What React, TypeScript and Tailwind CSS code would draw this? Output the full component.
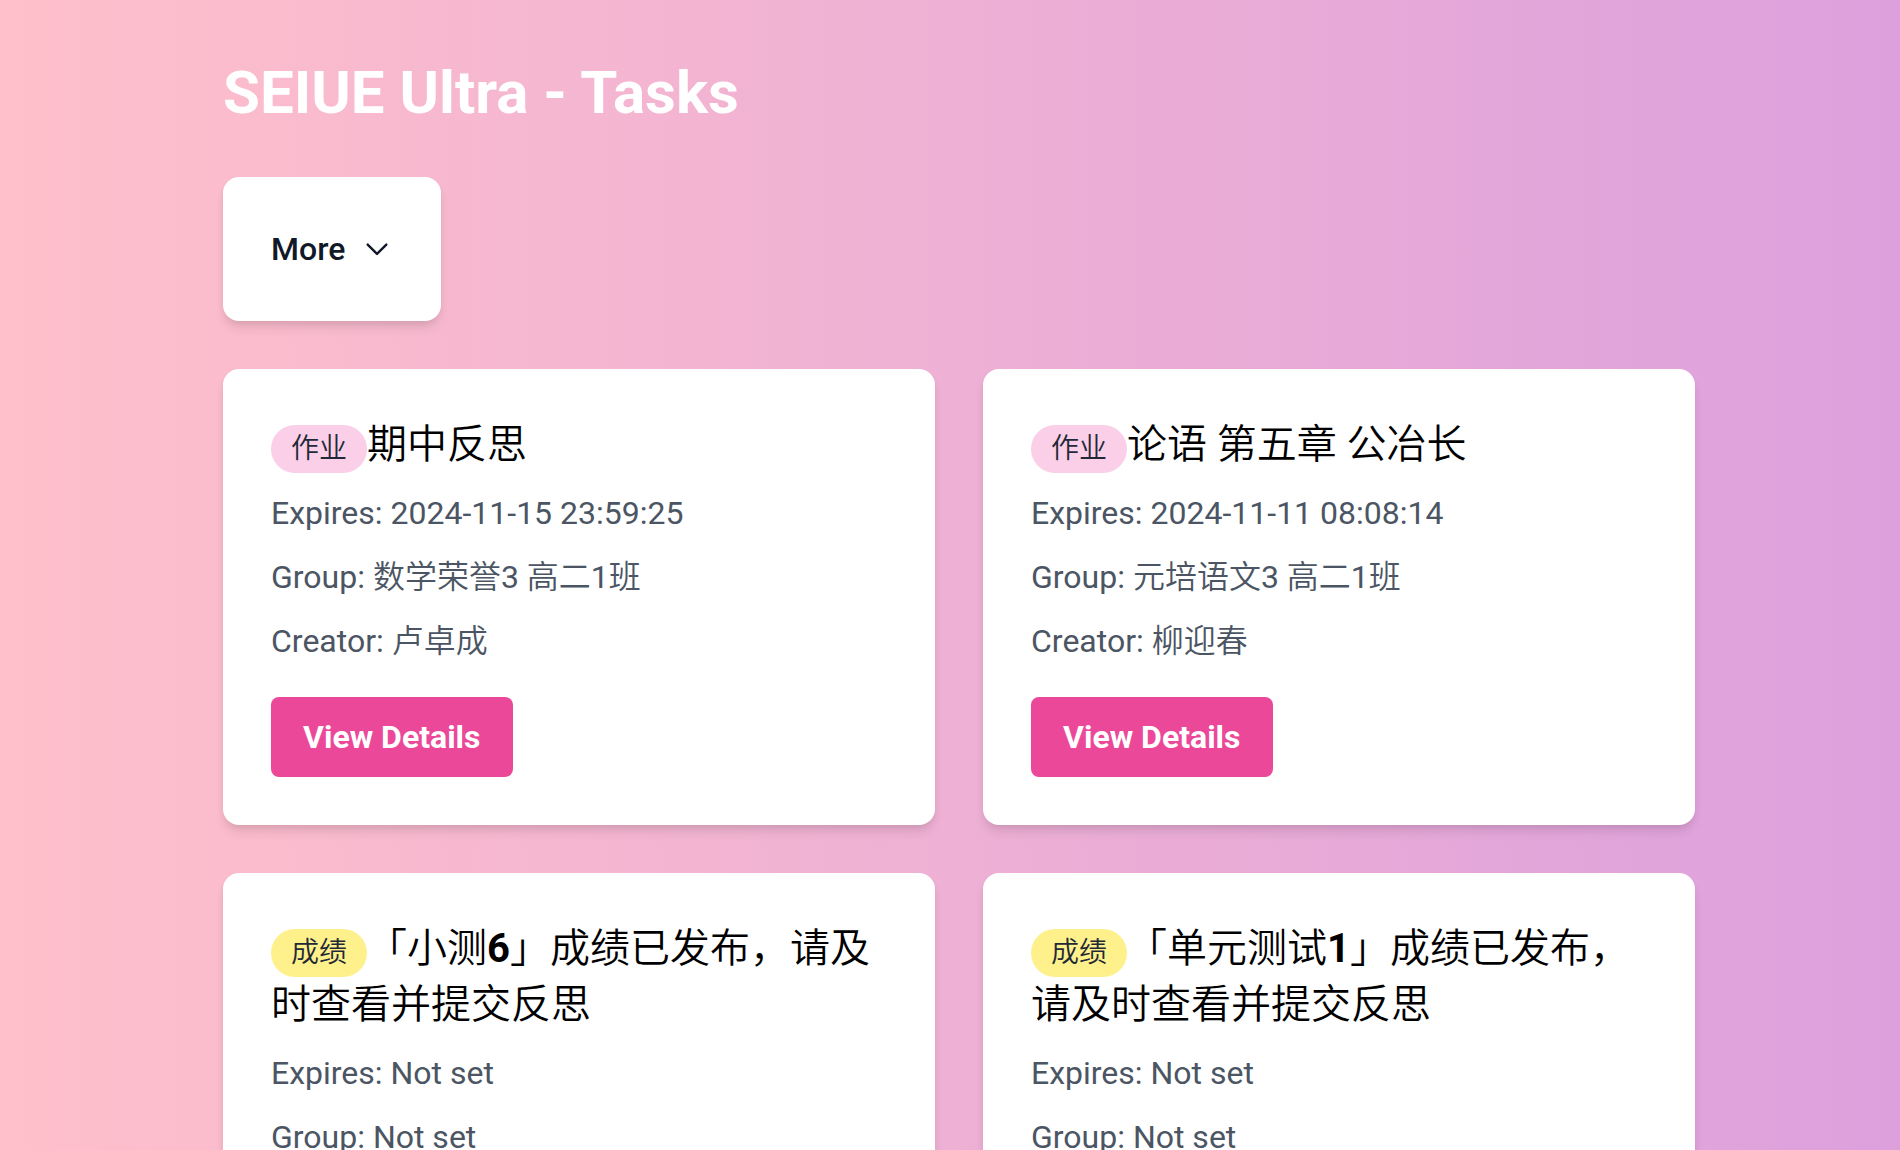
import React from "react";

type Task = {
  tag: string;
  tone: "pink" | "yellow";
  title: React.ReactNode;
  expires: string;
  group: string;
  creator: string;
};

const tasks: Task[] = [
  { tag: "作业", tone: "pink", title: "期中反思", expires: "2024-11-15 23:59:25", group: "数学荣誉3 高二1班", creator: "卢卓成" },
  { tag: "作业", tone: "pink", title: "论语 第五章 公冶长", expires: "2024-11-11 08:08:14", group: "元培语文3 高二1班", creator: "柳迎春" },
  { tag: "成绩", tone: "yellow", title: <>「小测<b className="font-bold">6</b>」成绩已发布，请及时查看并提交反思</>, expires: "Not set", group: "Not set", creator: "Not set" },
  { tag: "成绩", tone: "yellow", title: <>「单元测试<b className="font-bold">1</b>」成绩已发布，请及时查看并提交反思</>, expires: "Not set", group: "Not set", creator: "Not set" },
];

const tones = {
  pink: "bg-[#fbcfe8]",
  yellow: "bg-[#fef08a]",
};

// Sets runs of Chinese characters in a slightly lighter weight than Latin text.
function Mixed({ text }: { text: string }) {
  return text.split(/([\u4e00-\u9fff]+)/).map((part, i) =>
    i % 2 ? <span key={i} className="font-[350]">{part}</span> : part
  );
}

function TaskCard({ task }: { task: Task }) {
  return (
    <article className="rounded-2xl bg-white p-12 shadow-[0_8px_12px_-2px_rgba(0,0,0,0.1),0_4px_8px_-4px_rgba(0,0,0,0.1)]">
      <h2 className="mb-4 text-[40px] leading-[56px] font-[350] text-black">
        <span className={`inline-block rounded-full px-5 py-1 text-[28px] leading-10 text-[#1f2937] ${tones[task.tone]}`}>
          {task.tag}
        </span>
        {task.title}
      </h2>
      <div className="mb-8 space-y-4 text-[32px] leading-[48px] text-[#4b5563]">
        <p>Expires: {task.expires}</p>
        <p>Group: <Mixed text={task.group} /></p>
        <p>Creator: <Mixed text={task.creator} /></p>
      </div>
      <a href="#details" className="inline-block rounded-lg bg-[#ec4899] px-8 py-4 text-[32px] leading-[48px] font-bold text-white">
        View Details
      </a>
    </article>
  );
}

export default function App() {
  return (
    <div className="h-screen overflow-hidden bg-[linear-gradient(to_right,#ffc0cb,#dda0dd)] pl-[18px] font-[Roboto,'Noto_Sans_CJK_SC',sans-serif]">
      <main className="mx-auto max-w-[1536px] px-8 pt-[57px]">
        <h1 className="mb-12 text-[60px] leading-[72px] font-bold text-white">SEIUE Ultra - Tasks</h1>
        <div className="mb-12 w-fit rounded-2xl bg-white p-12 shadow-[0_8px_12px_-2px_rgba(0,0,0,0.1),0_4px_8px_-4px_rgba(0,0,0,0.1)]">
          <button type="button" className="flex items-center gap-4 text-[32px] leading-[48px] font-medium text-[#111827]">
            More
            <svg viewBox="0 0 24 24" className="size-8" fill="none" stroke="currentColor" strokeWidth="1.8" aria-hidden="true">
              <path d="M19 8.7l-7 7-7-7" strokeLinecap="round" strokeLinejoin="round" />
            </svg>
          </button>
        </div>
        <div className="grid grid-cols-2 gap-12">
          {tasks.map((task, i) => (
            <TaskCard key={i} task={task} />
          ))}
        </div>
      </main>
    </div>
  );
}
